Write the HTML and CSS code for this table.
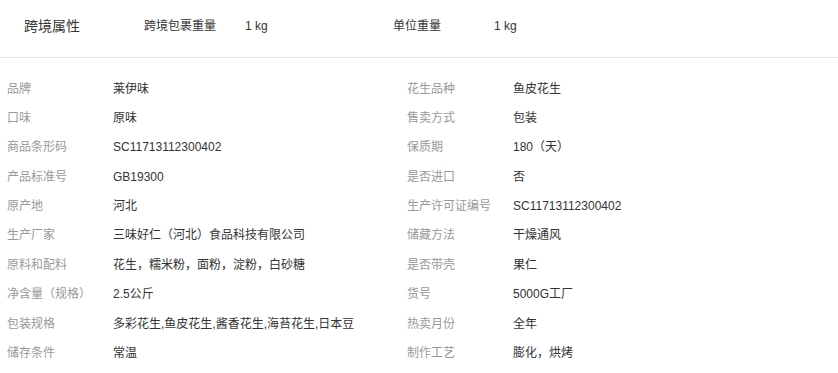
FILE: index.html
```html
<!DOCTYPE html>
<html lang="zh-CN">
<head>
<meta charset="utf-8">
<title>跨境属性</title>
<link rel="stylesheet" href="styles.css">
</head>
<body>
<div class="header">
  <div class="title">跨境属性</div>
  <div class="hitem"><span class="hlabel">跨境包裹重量</span><span class="hvalue">1 kg</span></div>
  <div class="hitem"><span class="hlabel">单位重量</span><span class="hvalue">1 kg</span></div>
</div>
<div class="attrs">
  <div class="cell"><span class="label">品牌</span><span class="value">莱伊味</span></div>
  <div class="cell"><span class="label">花生品种</span><span class="value">鱼皮花生</span></div>
  <div class="cell"><span class="label">口味</span><span class="value">原味</span></div>
  <div class="cell"><span class="label">售卖方式</span><span class="value">包装</span></div>
  <div class="cell"><span class="label">商品条形码</span><span class="value">SC11713112300402</span></div>
  <div class="cell"><span class="label">保质期</span><span class="value">180（天）</span></div>
  <div class="cell"><span class="label">产品标准号</span><span class="value">GB19300</span></div>
  <div class="cell"><span class="label">是否进口</span><span class="value">否</span></div>
  <div class="cell"><span class="label">原产地</span><span class="value">河北</span></div>
  <div class="cell"><span class="label">生产许可证编号</span><span class="value">SC11713112300402</span></div>
  <div class="cell"><span class="label">生产厂家</span><span class="value">三味好仁（河北）食品科技有限公司</span></div>
  <div class="cell"><span class="label">储藏方法</span><span class="value">干燥通风</span></div>
  <div class="cell"><span class="label">原料和配料</span><span class="value">花生，糯米粉，面粉，淀粉，白砂糖</span></div>
  <div class="cell"><span class="label">是否带壳</span><span class="value">果仁</span></div>
  <div class="cell"><span class="label">净含量（规格）</span><span class="value">2.5公斤</span></div>
  <div class="cell"><span class="label">货号</span><span class="value">5000G工厂</span></div>
  <div class="cell"><span class="label">包装规格</span><span class="value">多彩花生,鱼皮花生,酱香花生,海苔花生,日本豆</span></div>
  <div class="cell"><span class="label">热卖月份</span><span class="value">全年</span></div>
  <div class="cell"><span class="label">储存条件</span><span class="value">常温</span></div>
  <div class="cell"><span class="label">制作工艺</span><span class="value">膨化，烘烤</span></div>
</div>
</body>
</html>
```
FILE: styles.css
```css
* { box-sizing: border-box; }
body {
  margin: 0;
  background: #fff;
  font-family: "Liberation Sans", "Noto Sans CJK SC", sans-serif;
  font-size: 12px;
  color: #333;
}
.header {
  display: flex;
  align-items: center;
  height: 58px;
  padding: 0 0 6px 24px;
  border-bottom: 1px solid #e6e6e6;
}
.title {
  width: 120px;
  font-size: 14px;
  line-height: 20px;
  color: #333;
}
.hitem {
  display: flex;
  width: 249px;
  line-height: 20px;
}
.hlabel {
  width: 101px;
  color: #333;
}
.hvalue { color: #333; }
.attrs {
  display: grid;
  grid-template-columns: 400px 400px;
  padding: 16.5px 0 0 7px;
}
.cell {
  display: flex;
  height: 29.4px;
  line-height: 29.4px;
  white-space: nowrap;
}
.label {
  width: 106px;
  color: #999;
}
.value { color: #333; }
```
